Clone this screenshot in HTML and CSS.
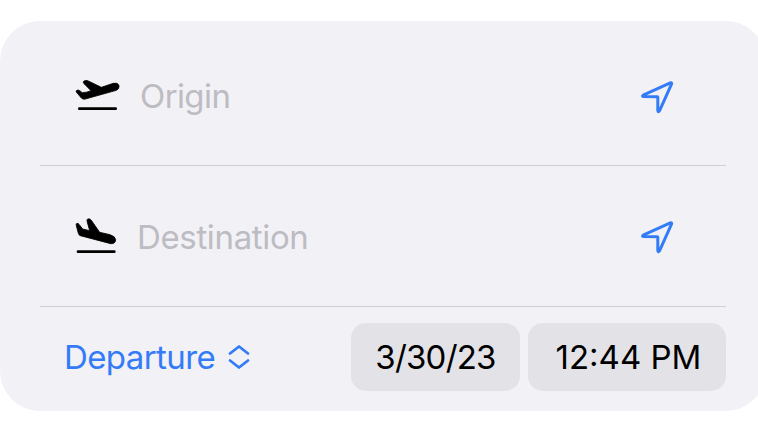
FILE: index.html
```
<!DOCTYPE html>
<html lang="en">
<head>
<meta charset="utf-8">
<title>Flight search</title>
<link rel="stylesheet" href="styles.css">
</head>
<body>
<main class="card">
  <div class="row row-origin">
    <svg class="plane" viewBox="0 0 168 135" aria-hidden="true">
      <path class="body" d="M19 60Q17 56 21 55Q25 53 29 56L37 62Q50 62 63 56L41 34Q38 29 42 27Q47 24 53 26L94 46L130 34Q143 31 147 40Q149 51 139 55L46 81Q39 83 34 78Z"/>
      <path class="runway" d="M28 110H137"/>
    </svg>
    <span class="place origin">Origin</span>
    <svg class="locate" viewBox="0 0 60 54" aria-hidden="true"><path d="M13.2 25.2L40.3 12.9Q42.2 12.3 41.5 14.2L29.5 40.8Q28.2 42.8 27.8 40.4V27.2Q27.8 26.7 27.2 26.7L14 26.6Q11.5 26.4 13.2 25.2Z"/></svg>
  </div>
  <div class="row row-destination">
    <svg class="plane" viewBox="0 0 168 135" aria-hidden="true">
      <path class="body" d="M19 41Q17 35 21 34Q25 34 28 38L38 51L59 56L51 27Q50 21 54 21Q60 19 64 25L89 61L120 68Q136 73 137 83Q136 96 122 95L31 71Q26 69 25 64Z"/>
      <path class="runway" d="M24 119H133"/>
    </svg>
    <span class="place destination">Destination</span>
    <svg class="locate" viewBox="0 0 60 54" aria-hidden="true"><path d="M13.2 25.2L40.3 12.9Q42.2 12.3 41.5 14.2L29.5 40.8Q28.2 42.8 27.8 40.4V27.2Q27.8 26.7 27.2 26.7L14 26.6Q11.5 26.4 13.2 25.2Z"/></svg>
  </div>
  <div class="row row-time">
    <span class="mode">Departure</span>
    <svg class="chevrons" viewBox="0 0 24 26" aria-hidden="true"><path d="M3 9.5L12 2.5L21 9.5M3 16.5L12 23.5L21 16.5"/></svg>
    <span class="pill date">3/30/23</span>
    <span class="pill time">12:44 PM</span>
  </div>
</main>
</body>
</html>
```
FILE: styles.css
```
body {
  margin: 0;
  padding-top: 21px;
  background: #fff;
  overflow: hidden;
  font-family: Inter, "Liberation Sans", sans-serif;
  font-size: 33px;
  line-height: 40px;
}

.card {
  box-sizing: border-box;
  width: 766px;
  height: 390px;
  padding: 0 40px;
  border-radius: 40px;
  background: #f2f1f6;
}

.row {
  box-sizing: border-box;
  display: flex;
  align-items: center;
  white-space: nowrap;
}

.row-origin,
.row-destination {
  padding-left: 30px;
  padding-right: 36px;
  border-bottom: 1px solid #cfced3;
}

.row-origin {
  height: 145px;
  padding-top: 7px;
}

.row-destination {
  height: 141px;
  padding-top: 2px;
}

.plane {
  width: 56px;
  height: 45px;
  margin-top: -5px;
}

.row-destination .plane {
  margin-top: -5px;
}

.body {
  stroke: #000;
  stroke-width: 2.5;
  stroke-linejoin: round;
}

.runway {
  fill: none;
  stroke: #000;
  stroke-width: 8;
  stroke-linecap: round;
}

.place {
  color: #bdbcc2;
}

.origin {
  margin-left: 14px;
  margin-top: -2px;
  letter-spacing: -0.6px;
}

.destination {
  margin-left: 11px;
  margin-top: -1px;
  letter-spacing: -0.35px;
}

.locate {
  width: 60px;
  height: 54px;
  margin-left: auto;
  fill: none;
  stroke: #347cf7;
  stroke-width: 3;
  stroke-linejoin: round;
}

.row-time {
  height: 104px;
  padding-left: 24px;
  padding-bottom: 5px;
}

.mode {
  color: #347cf7;
  letter-spacing: -0.6px;
}

.chevrons {
  width: 24px;
  height: 26px;
  margin-left: 12px;
  fill: none;
  stroke: #347cf7;
  stroke-width: 2.8;
  stroke-linecap: round;
  stroke-linejoin: round;
}

.pill {
  box-sizing: border-box;
  height: 68px;
  padding-top: 14px;
  border-radius: 15px;
  background: #e3e2e7;
  color: #000;
  text-align: center;
}

.date {
  width: 169px;
  margin-left: auto;
  letter-spacing: -0.8px;
}

.time {
  width: 198px;
  margin-left: 8px;
  padding-left: 3px;
  letter-spacing: 0;
}
```
